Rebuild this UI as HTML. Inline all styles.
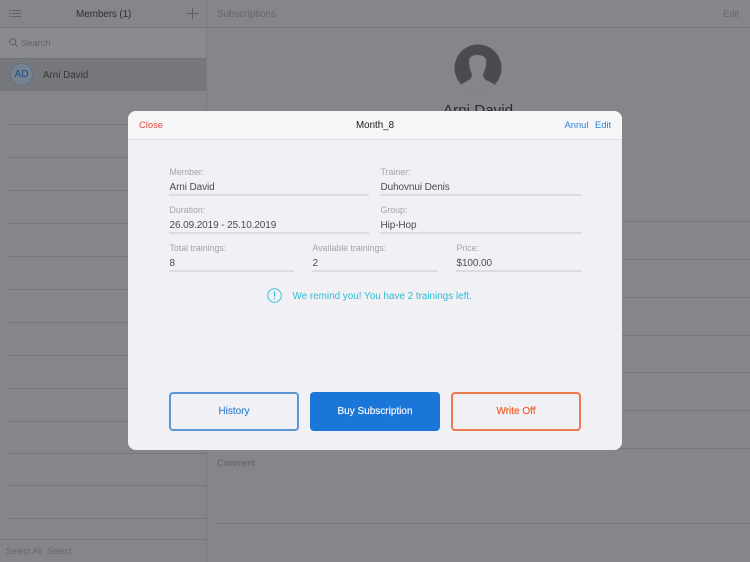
<!DOCTYPE html>
<html><head><meta charset="utf-8"><style>
html,body{margin:0;padding:0;background:#85868a}
body{width:750px;height:562px;position:relative;overflow:hidden;font-family:"Liberation Sans",sans-serif}
#w{position:absolute;left:0;top:0;width:750px;height:562px;overflow:hidden;background:#85868a;filter:blur(.3px)}
.t{position:absolute;white-space:nowrap;line-height:14px}
.l{position:absolute;height:1px;background:#76777b}
.lb{font-size:8.8px;color:#a3a3a8}
.v{font-size:10px;color:#4b4b50;letter-spacing:-.1px}
.u{position:absolute;height:2px;background:#dcdce0}
.b{position:absolute;top:392px;height:39px;width:130px;box-sizing:border-box;border-radius:4px;text-align:center;font-size:10px;-webkit-text-stroke:.2px currentColor}
</style></head><body><div id="w">
<div class="l" style="left:0;top:27px;width:750px;background:#78797d"></div>
<div style="position:absolute;left:206px;top:0;width:1px;height:562px;background:#7a7b7f"></div>
<div style="position:absolute;left:0;top:28px;width:206px;height:30px;background:#8a8b8f"></div>
<div style="position:absolute;left:0;top:58px;width:206px;height:33px;background:#77787c;border-top:1px solid #6f7074;box-sizing:border-box"></div>
<svg style="position:absolute;left:9px;top:9px" width="13" height="10" stroke="#606166" stroke-width="1" fill="none"><path d="M3 1.500H12M3 4.500H12M3 7.500H12M0 1.500H2M0 4.500H2M0 7.500H2"/></svg>
<div class="t" style="left:76px;top:8px;font-size:10px;color:#2f3033;letter-spacing:-.13px">Members (1)</div>
<svg style="position:absolute;left:187px;top:8px" width="11" height="11" stroke="#5c5d62" stroke-width="1" fill="none"><path d="M5.500 0V11M0 5.500H11"/></svg>
<div class="t" style="left:217px;top:8px;font-size:10px;color:#66676b;letter-spacing:-.1px">Subscriptions</div>
<div class="t" style="left:723px;top:7px;font-size:9.400px;color:#66676b">Edit</div>
<svg style="position:absolute;left:9px;top:38px" width="9" height="9" stroke="#5c5d62" stroke-width="1" fill="none"><circle cx="3.700" cy="3.700" r="3"/><path d="M6 6L8.500 8.500"/></svg>
<div class="t" style="left:21px;top:36px;font-size:9.300px;color:#626367">Search</div>
<div style="position:absolute;left:10px;top:63px;width:23px;height:23px;border-radius:50%;background:#76828f;border:1px solid #617489;box-sizing:border-box;text-align:center;line-height:21px;font-size:10px;color:#1f4a7c">AD</div>
<div class="t" style="left:43px;top:69px;font-size:9.800px;color:#35363a">Arni David</div>
<div class="l" style="left:8px;top:124px;width:198px"></div>
<div class="l" style="left:8px;top:157px;width:198px"></div>
<div class="l" style="left:8px;top:190px;width:198px"></div>
<div class="l" style="left:8px;top:223px;width:198px"></div>
<div class="l" style="left:8px;top:256px;width:198px"></div>
<div class="l" style="left:8px;top:289px;width:198px"></div>
<div class="l" style="left:8px;top:322px;width:198px"></div>
<div class="l" style="left:8px;top:355px;width:198px"></div>
<div class="l" style="left:8px;top:388px;width:198px"></div>
<div class="l" style="left:8px;top:421px;width:198px"></div>
<div class="l" style="left:8px;top:453px;width:198px"></div>
<div class="l" style="left:8px;top:485px;width:198px"></div>
<div class="l" style="left:8px;top:518px;width:198px"></div>
<div class="l" style="left:0;top:539px;width:206px"></div>
<div class="t" style="left:6px;top:544px;font-size:8.800px;color:#66676b">Select All</div>
<div class="t" style="left:47px;top:544px;font-size:8.800px;color:#66676b">Select</div>
<div class="l" style="left:622px;top:221px;width:128px"></div>
<div class="l" style="left:622px;top:259px;width:128px"></div>
<div class="l" style="left:622px;top:297px;width:128px"></div>
<div class="l" style="left:622px;top:335px;width:128px"></div>
<div class="l" style="left:622px;top:372px;width:128px"></div>
<div class="l" style="left:622px;top:410px;width:128px"></div>
<div class="l" style="left:217px;top:448px;width:533px"></div>
<div class="l" style="left:217px;top:523px;width:533px"></div>
<div class="t" style="left:217px;top:456px;font-size:8.800px;color:#5f6064">Comment</div>
<svg style="position:absolute;left:454px;top:44px" width="48" height="48"><defs><clipPath id="c"><circle cx="24" cy="24" r="23.500"/></clipPath></defs><circle cx="24" cy="24" r="23.500" fill="#4a4b4f"/><path clip-path="url(#c)" fill="#85868a" d="M23.500 11C17 11 14.500 14 15 19C15.300 23 16 26 17.500 29C18.500 33 17 35 13 37L8 40V50H40V40L34 37C30 35 28.500 33 29.500 29C31 26 32 23 32.200 19C32.700 14 30 11 23.500 11Z"/></svg>
<div class="t" style="left:443px;top:101px;font-size:15.200px;line-height:20px;color:#2a2b2e">Arni David</div>

<div style="position:absolute;left:128px;top:111px;width:494px;height:339px;border-radius:8px;background:#f0f0f5;overflow:hidden">
<div style="position:absolute;left:0;top:0;width:494px;height:28px;background:#f6f6f9;border-bottom:1px solid #e0e0e5"></div>
</div>
<div class="t" style="left:139px;top:118px;font-size:9.400px;color:#e3493f">Close</div>
<div class="t" style="left:356px;top:119px;font-size:9.800px;color:#1b1b1d">Month_8</div>
<div class="t" style="left:564.500px;top:118px;font-size:9.400px;color:#2384dc">Annul</div>
<div class="t" style="left:595px;top:118px;font-size:9.400px;color:#2384dc">Edit</div>

<div class="t lb" style="left:169.500px;top:165px">Member:</div>
<div class="t v" style="left:169.500px;top:181px">Arni David</div>
<div class="u" style="left:169px;top:194px;width:200px"></div>
<div class="t lb" style="left:380.500px;top:165px">Trainer:</div>
<div class="t v" style="left:380.500px;top:181px">Duhovnui Denis</div>
<div class="u" style="left:380px;top:194px;width:201px"></div>
<div class="t lb" style="left:169.500px;top:203px">Duration:</div>
<div class="t v" style="left:169.500px;top:219px">26.09.2019 - 25.10.2019</div>
<div class="u" style="left:169px;top:232px;width:200px"></div>
<div class="t lb" style="left:380.500px;top:203px">Group:</div>
<div class="t v" style="left:380.500px;top:219px">Hip-Hop</div>
<div class="u" style="left:380px;top:232px;width:201px"></div>
<div class="t lb" style="left:169.500px;top:241px">Total trainings:</div>
<div class="t v" style="left:169.500px;top:257px">8</div>
<div class="u" style="left:169px;top:270px;width:125px"></div>
<div class="t lb" style="left:312.500px;top:241px">Available trainings:</div>
<div class="t v" style="left:312.500px;top:257px">2</div>
<div class="u" style="left:312px;top:270px;width:125px"></div>
<div class="t lb" style="left:456.500px;top:241px">Price:</div>
<div class="t v" style="left:456.500px;top:257px">$100.00</div>
<div class="u" style="left:456px;top:270px;width:125px"></div>

<svg style="position:absolute;left:267px;top:288px" width="15" height="15" fill="none" stroke="#3dc0d6"><circle cx="7.500" cy="7.500" r="6.800"/><path d="M7.500 3.500V8.800M7.500 10V11.200" stroke-width="1.100"/></svg>
<div class="t" style="left:292.500px;top:290px;font-size:9.900px;color:#2fbdd3">We remind you! You have 2 trainings left.</div>

<div class="b" style="left:169px;border:2px solid #5b97d3;color:#3f86cf;line-height:36px">History</div>
<div class="b" style="left:310px;background:#1b76d9;color:#f2f6fb;line-height:40px">Buy Subscription</div>
<div class="b" style="left:451px;border:2px solid #ee7a50;color:#ee5f2b;line-height:36px">Write Off</div>
</div></body></html>
